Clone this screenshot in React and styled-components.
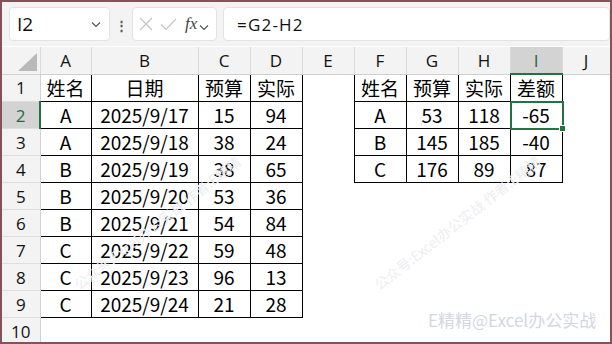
import React from 'react'
import styled, { createGlobalStyle } from 'styled-components'

const GlobalStyle = createGlobalStyle`
  body {
    margin: 0;
    background: #fff;
  }
`

const Frame = styled.div`
  position: relative;
  width: 612px;
  height: 344px;
  box-sizing: border-box;
  border: 2px solid #85525c;
  overflow: hidden;
  background: #fff;
  font-family: "Noto Sans CJK SC", "Noto Sans", sans-serif;
`

const FormulaBar = styled.div`
  display: flex;
  align-items: center;
  height: 44px;
  padding: 0 0 0 7px;
  background: #f3f3f3;
  box-sizing: border-box;
`

const Box = styled.div`
  display: flex;
  align-items: center;
  height: 34px;
  box-sizing: border-box;
  background: #fff;
  border: 1px solid #e2e2e2;
  border-radius: 4px;
  width: ${p => p.$w ? p.$w + 'px' : 'auto'};
  flex: ${p => p.$grow ? 1 : 'none'};
  padding: ${p => p.$pad || '0 8px'};
`

const NameText = styled.span`
  flex: 1;
  font-family: "Open Sans", sans-serif;
  font-size: 19px;
  color: #111;
`

const FormulaText = styled.span`
  font-family: "Open Sans", sans-serif;
  font-size: 17px;
  letter-spacing: 1.2px;
  color: #111;
`

const Dots = styled.span`
  width: 22px;
  text-align: center;
  color: #555;
  font-size: 13px;
  font-weight: bold;
`

const Gap = styled.div`
  width: 6px;
`

const Fx = styled.span`
  font-family: "Liberation Serif", serif;
  font-style: italic;
  font-size: 17px;
  color: #444;
  margin-left: 6px;
`

const Sheet = styled.table`
  border-collapse: collapse;
  table-layout: fixed;
  width: 606px;
  margin-top: 1px;
`

const HeadCell = styled.th`
  height: 27px;
  padding: 0;
  background: ${p => p.$active ? '#d3d3d3' : '#f3f3f3'};
  border-left: 1px solid #dadada;
  border-right: 1px solid #dadada;
  border-bottom: ${p => p.$active ? '2px solid #217346' : '1px solid #d0d0d0'};
  color: ${p => p.$active ? '#1d6b40' : '#111'};
  font-family: "Open Sans", sans-serif;
  font-weight: normal;
  font-size: 17px;
  text-align: center;
  box-sizing: border-box;
`

const Corner = styled.th`
  position: relative;
  padding: 0;
  background: #f3f3f3;
  border-right: 1px solid #dadada;
  border-bottom: 1px solid #d0d0d0;
`

const Triangle = styled.div`
  position: absolute;
  right: 3px;
  bottom: 3px;
  width: 0;
  height: 0;
  border-left: 19px solid transparent;
  border-bottom: 18px solid #b9b9b9;
`

const RowHead = styled.td`
  height: 26px;
  padding: 0;
  background: ${p => p.$active ? '#d3d3d3' : '#f3f3f3'};
  border-right: ${p => p.$active ? '2px solid #217346' : '1px solid #d0d0d0'};
  border-bottom: 1px solid #dedede;
  color: ${p => p.$active ? '#1d6b40' : '#111'};
  font-family: "Open Sans", sans-serif;
  font-size: 17px;
  text-align: center;
`

const Cell = styled.td`
  position: relative;
  height: 26px;
  padding: 0;
  border: ${p => p.$boxed ? '1px solid #000' : 'none'};
  font-size: 19px;
  line-height: 26px;
  text-align: center;
  color: #000;
  white-space: nowrap;
  overflow: visible;
`

const Selection = styled.div`
  position: absolute;
  left: -1px;
  top: -1px;
  right: -2px;
  bottom: -2px;
  border: 2px solid #217346;
  pointer-events: none;
`

const Handle = styled.div`
  position: absolute;
  right: -4px;
  bottom: -4px;
  width: 5px;
  height: 5px;
  background: #217346;
  border: 1px solid #fff;
`

const Watermark = styled.div`
  position: absolute;
  white-space: nowrap;
  font-size: ${p => p.$size || 16}px;
  color: ${p => p.$color || '#c9cbd8'};
  transform: rotate(${p => p.$rot || 0}deg);
  transform-origin: left bottom;
  pointer-events: none;
`

const cols = [
  { key: 'A', w: 51 },
  { key: 'B', w: 107 },
  { key: 'C', w: 52 },
  { key: 'D', w: 52 },
  { key: 'E', w: 52 },
  { key: 'F', w: 52 },
  { key: 'G', w: 52 },
  { key: 'H', w: 52 },
  { key: 'I', w: 52 },
  { key: 'J', w: 48 },
]

const left = [
  ['姓名', '日期', '预算', '实际'],
  ['A', '2025/9/17', '15', '94'],
  ['A', '2025/9/18', '38', '24'],
  ['B', '2025/9/19', '38', '65'],
  ['B', '2025/9/20', '53', '36'],
  ['B', '2025/9/21', '54', '84'],
  ['C', '2025/9/22', '59', '48'],
  ['C', '2025/9/23', '96', '13'],
  ['C', '2025/9/24', '21', '28'],
]

const right = [
  ['姓名', '预算', '实际', '差额'],
  ['A', '53', '118', '-65'],
  ['B', '145', '185', '-40'],
  ['C', '176', '89', '87'],
]

const Chevron = () => (
  <svg width="10" height="7" viewBox="0 0 10 7">
    <path d="M1 1.5 L5 5.5 L9 1.5" fill="none" stroke="#555" strokeWidth="1.2" />
  </svg>
)

const FuncIcons = () => (
  <svg width="40" height="14" viewBox="0 0 40 14">
    <path d="M1 1 L13 13 M13 1 L1 13" stroke="#c4c4c4" strokeWidth="1.2" fill="none" />
    <path d="M22 7.5 L27 12.5 L37 2" stroke="#c4c4c4" strokeWidth="1.2" fill="none" />
  </svg>
)

const wmText = '公众号:Excel办公实战     作者:E精精'

export default function App() {
  const rows = []
  for (let r = 0; r < 10; r++) {
    const cells = []
    for (let c = 0; c < cols.length; c++) {
      let value = ''
      let boxed = false
      if (r < 9 && c < 4) {
        value = left[r][c]
        boxed = true
      } else if (r < 4 && c >= 5 && c <= 8) {
        value = right[r][c - 5]
        boxed = true
      }
      const selected = r === 1 && c === 8
      cells.push(
        <Cell key={c} $boxed={boxed}>
          {value}
          {selected && (
            <Selection>
              <Handle />
            </Selection>
          )}
        </Cell>
      )
    }
    rows.push(
      <tr key={r}>
        <RowHead $active={r === 1}>{r + 1}</RowHead>
        {cells}
      </tr>
    )
  }

  return (
    <>
      <GlobalStyle />
      <Frame>
        <FormulaBar>
          <Box $w={101} $pad="0 8px 0 7px">
            <NameText>I2</NameText>
            <Chevron />
          </Box>
          <Dots>⋮</Dots>
          <Box $w={85} $pad="0 5px 0 6px">
            <FuncIcons />
            <Fx>fx</Fx>
            <span style={{ marginLeft: 2 }}><Chevron /></span>
          </Box>
          <Gap />
          <Box $grow $pad="0 13px">
            <FormulaText>=G2-H2</FormulaText>
          </Box>
        </FormulaBar>
        <Sheet>
          <colgroup>
            <col style={{ width: 38 }} />
            {cols.map(c => <col key={c.key} style={{ width: c.w }} />)}
          </colgroup>
          <thead>
            <tr>
              <Corner><Triangle /></Corner>
              {cols.map(c => (
                <HeadCell key={c.key} $active={c.key === 'I'}>{c.key}</HeadCell>
              ))}
            </tr>
          </thead>
          <tbody>{rows}</tbody>
        </Sheet>
        <Watermark style={{ left: 80, top: 272 }} $rot={-38} $size={14} $color="#ededf1">{wmText}</Watermark>
        <Watermark style={{ left: 380, top: 272 }} $rot={-38} $size={14} $color="#ededf1">{wmText}</Watermark>
        <Watermark style={{ left: 426, top: 305 }} $size={17} $color="#d4d6e3">E精精@Excel办公实战</Watermark>
      </Frame>
    </>
  )
}
